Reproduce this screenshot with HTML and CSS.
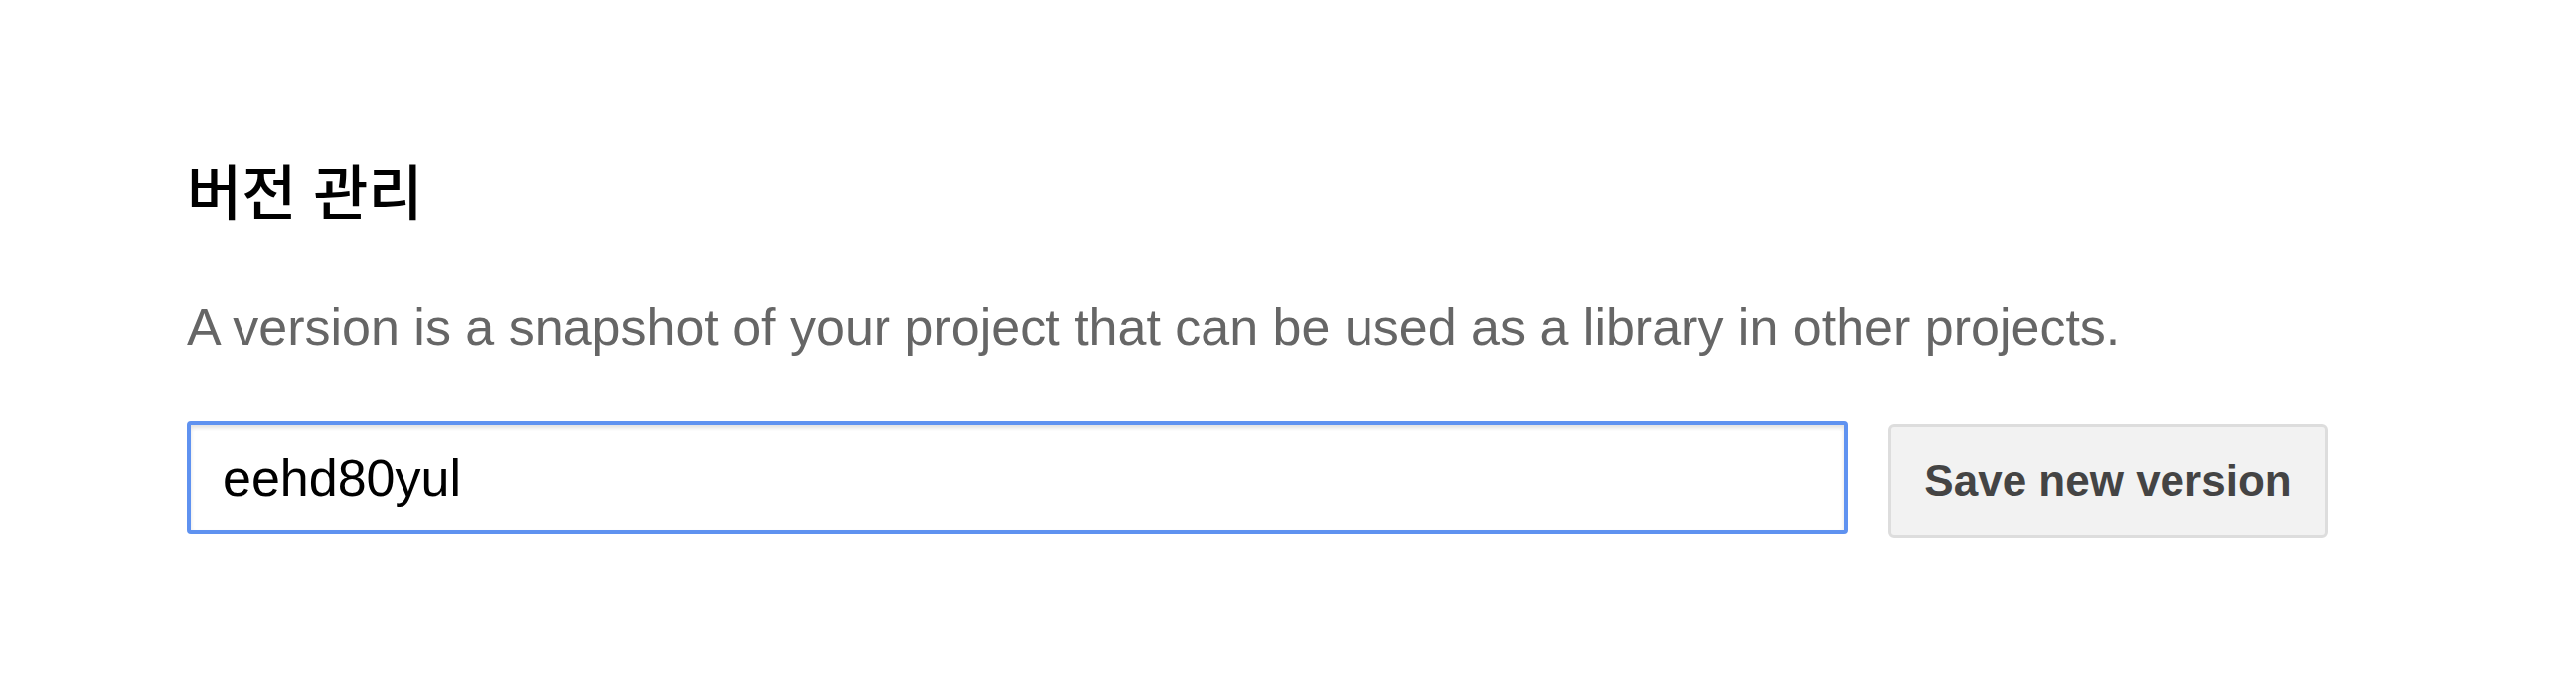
FILE: index.html
```html
<!DOCTYPE html>
<html lang="ko">
<head>
<meta charset="utf-8">
<link rel="stylesheet" href="styles.css">
</head>
<body>
<div class="page">
  <h1 class="title">버전 관리</h1>
  <p class="desc">A version is a snapshot of your project that can be used as a library in other projects.</p>
  <div class="row">
    <div class="field">eehd80yul</div>
    <button class="btn">Save new version</button>
  </div>
</div>
</body>
</html>
```
FILE: styles.css
```css
html, body {
  margin: 0;
  padding: 0;
  background: #ffffff;
}
.page {
  padding: 150px 0 0 188px;
  font-family: "Liberation Sans", Arial, sans-serif;
}
.title {
  margin: 0;
  font-family: "Noto Sans CJK KR", "Liberation Sans", sans-serif;
  font-weight: 500;
  font-size: 60px;
  line-height: 80px;
  color: #000;
}
.desc {
  margin: 69px 0 0 0;
  font-size: 52px;
  line-height: 60px;
  color: #666666;
}
.row {
  display: flex;
  align-items: flex-start;
  gap: 41px;
  margin-top: 64px;
}
.field {
  box-sizing: border-box;
  width: 1671px;
  height: 114px;
  border: 4px solid #5f92f0;
  border-radius: 4px;
  box-shadow: inset 0 3px 4px rgba(0,0,0,0.12);
  padding: 2px 0 0 32px;
  display: flex;
  align-items: center;
  font-size: 52px;
  color: #000;
}
.btn {
  box-sizing: border-box;
  margin-top: 3px;
  width: 442px;
  height: 115px;
  border: 3px solid #dddddd;
  border-radius: 6px;
  background: #f2f2f2;
  font-family: "Liberation Sans", Arial, sans-serif;
  font-weight: 700;
  font-size: 44px;
  color: #444444;
  padding: 0;
}
```
